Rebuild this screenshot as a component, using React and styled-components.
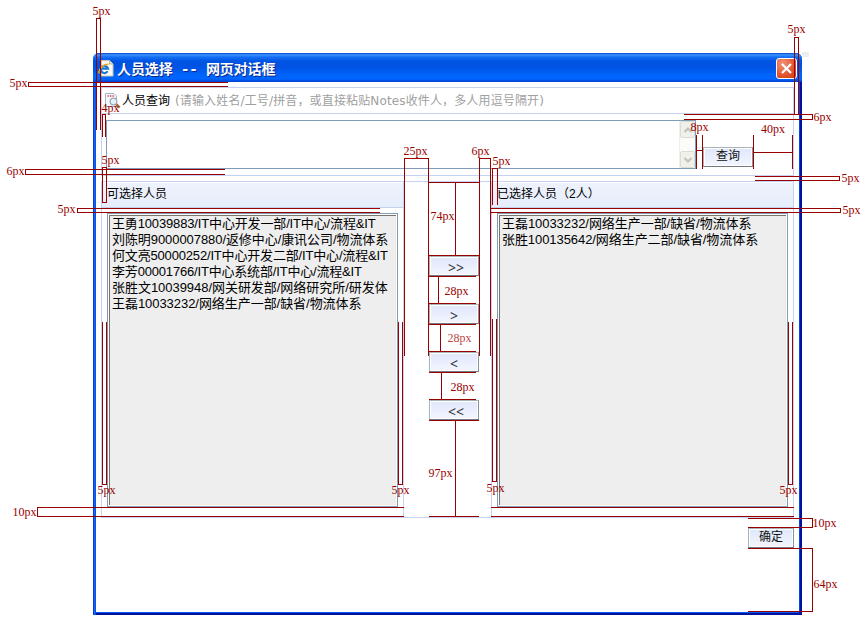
import React from 'react';
import styled, { createGlobalStyle } from 'styled-components';

const cjk = '"Noto Sans CJK SC", sans-serif';

const GlobalStyle = createGlobalStyle`
  *, *::before, *::after { box-sizing: border-box; }
  body { margin: 0; background: #fff; overflow: hidden; }
`;

const Page = styled.main`
  position: relative;
  width: 866px;
  height: 621px;
  padding: 53px 0 0 93px;
  font-family: "Liberation Sans", ${cjk};
  font-size: 12px;
  color: #000;
`;

const Dialog = styled.section`
  width: 709px;
  height: 562px;
  display: flex;
  flex-direction: column;
  border-radius: 6px 6px 0 0;
  background: #0b4ce0;
  overflow: hidden;
`;

const TitleBar = styled.header`
  height: 29px;
  flex: none;
  display: flex;
  align-items: center;
  padding: 1px 5px 0 5px;
  background: linear-gradient(#0a48d0 0, #3c94ff 2px, #1470f4 4px, #0054e3 8px, #0052e2 14px, #0064fc 22px, #0066ff 26px, #003dd0 29px);
`;

const Title = styled.h1`
  margin: 2px auto 0 2px;
  font: bold 14px/20px "DejaVu Sans Mono", ${cjk};
  letter-spacing: -0.1px;
  white-space: pre;
  color: #fff;
  text-shadow: 1px 1px 0 #0a2a8c;
`;

const CloseButton = styled.button`
  width: 21px;
  height: 21px;
  padding: 0;
  display: grid;
  place-items: center;
  border: 1px solid #fff;
  border-radius: 3px;
  background: radial-gradient(circle at 30% 25%, #f0947a, #e2522c 60%, #cf3a12);
`;

const Frame = styled.div`
  flex: 1;
  display: flex;
  padding: 0 3px 3px;
  background: linear-gradient(90deg, #0a3cc8 0, #0a3cc8 1px, #1464ff 1px, #1464ff 2px, #0855e8 2px, #0855e8 3px, #0013a0 3px);
`;

const Body = styled.div`
  flex: 1;
  display: flex;
  flex-direction: column;
  padding: 5px 5px 0;
  background: #fff;
  box-shadow: 1px 0 0 #0046e8, 0 1px 0 #0855f0, 0 3px 0 #00149c;
`;

const SearchPanel = styled.section`
  height: 89px;
  border: 1px solid #c6d3f0;
`;

const SearchHeading = styled.div`
  height: 26px;
  display: flex;
  align-items: center;
  padding-left: 3px;
  border-bottom: 1px solid #c6d3f0;
  white-space: nowrap;
`;

const SearchLabel = styled.span`
  margin: 1px 5px 0 1px;
  font: 12px/18px "Liberation Sans", ${cjk};
`;

const Hint = styled.span`
  margin-top: 1px;
  font: 12px/18px "DejaVu Sans", ${cjk};
  letter-spacing: ${({ $spacing }) => $spacing}px;
  color: #a0a0a0;
`;

const SearchRow = styled.div`
  display: flex;
  align-items: flex-end;
  gap: 7px;
  padding: 6px 0 0 4px;
`;

const TextBox = styled.div`
  width: 590px;
  height: 49px;
  display: flex;
  justify-content: flex-end;
  border: 1px solid #7f9db9;
  background: #fff;
`;

const Scrollbar = styled.div`
  width: 16px;
  display: flex;
  flex-direction: column;
  justify-content: space-between;
  background: #fbfbf9;
  border-left: 1px solid #efefea;
`;

const ScrollButton = styled.div`
  height: 17px;
  display: grid;
  place-items: center;
  border: 1px solid #dddcd2;
  border-radius: 2px;
  background: #f1f0ea;
`;

const Button = styled.button`
  width: ${({ $width }) => $width}px;
  height: 20px;
  flex: none;
  padding: 0 0 2px;
  border: 1px solid;
  border-color: #a9b2b7 #8a9296 #73797c #a9b2b7;
  box-shadow: inset 0 0 0 1px #fff;
  background: linear-gradient(#dfe7fb, #f3f6ff);
  font: 12px/16px "Liberation Sans", ${cjk};
  color: #111;
`;

const QueryButton = styled(Button)`
  margin-bottom: 2px;
`;

const MoveButton = styled(Button)`
  padding: 3px 0 0 ${({ $shift }) => $shift}px;
  font: 14px/15px "Noto Sans", sans-serif;
  color: #333;
`;

const ListsPanel = styled.section`
  height: 337px;
  margin-top: 5px;
  display: grid;
  grid-template-columns: 302px 87px 302px;
  border: 1px solid #c6d3f0;
`;

const ListColumn = styled.div`
  display: flex;
  flex-direction: column;
  border: 0 solid #c6d3f0;
  border-right-width: ${({ $side }) => ($side === 'left' ? 1 : 0)}px;
  border-left-width: ${({ $side }) => ($side === 'right' ? 1 : 0)}px;
`;

const ListHeading = styled.h2`
  height: 26px;
  margin: 0;
  padding: 2px 0 0 5px;
  border-top: 1px solid #fff;
  border-bottom: 1px solid #c6d3f0;
  background: linear-gradient(#eef2fc, #e6edfb);
  font: 12px/18px "Liberation Sans", ${cjk};
`;

const ListBox = styled.ul`
  width: 291px;
  height: 294px;
  margin: 5px 0 0 5px;
  padding: 1px 0 0 2px;
  list-style: none;
  border: 1px solid #7f9db9;
  box-shadow: inset 0 0 0 1px #fff, inset 2px 2px 0 #77756c, inset -2px -2px 0 #f1eadc;
  background: #eee;
  overflow: hidden;
`;

const ListItem = styled.li`
  height: 16px;
  padding-left: 2px;
  font: 13px/17px "Liberation Sans", ${cjk};
  letter-spacing: ${({ $spacing }) => $spacing}px;
  white-space: nowrap;
`;

const MoveColumn = styled.div`
  display: flex;
  flex-direction: column;
  gap: 28px;
  padding: 74px 0 0 25px;
`;

const Footer = styled.footer`
  display: flex;
  justify-content: flex-end;
  padding-top: 10px;
`;

const Annotations = styled.svg`
  position: absolute;
  inset: 0;
  pointer-events: none;
  shape-rendering: crispEdges;
`;

const Measure = styled.text`
  font: 12px "Liberation Serif", serif;
  fill: ${({ $faded }) => ($faded ? '#bc4646' : '#990000')};
`;

const candidates = [
  ['王勇10039883/IT中心开发一部/IT中心/流程&IT', -0.15],
  ['刘陈明9000007880/返修中心/康讯公司/物流体系', -0.07],
  ['何文亮50000252/IT中心开发二部/IT中心/流程&IT', -0.17],
  ['李芳00001766/IT中心系统部/IT中心/流程&IT', -0.18],
  ['张胜文10039948/网关研发部/网络研究所/研发体', -0.04],
  ['王磊10033232/网络生产一部/缺省/物流体系', -0.05],
];

const selected = [
  ['王磊10033232/网络生产一部/缺省/物流体系', -0.05],
  ['张胜100135642/网络生产二部/缺省/物流体系', -0.07],
];

const moves = [['>>', 4], ['>', 0], ['<', 0], ['<<', 4]];

/* Dimension lines: x, y, width, height */
const rules = [
  [96, 18, 5, 1], [96, 18, 1, 112], [100, 18, 1, 112],
  [28, 82, 200, 1], [28, 86, 200, 1], [28, 82, 1, 5],
  [102, 114, 4, 1], [102, 114, 1, 23], [105, 114, 1, 23],
  [102, 167, 5, 1], [102, 202, 5, 1], [102, 167, 1, 36], [106, 167, 1, 36],
  [25, 169, 200, 1], [25, 174, 200, 1], [25, 169, 1, 6],
  [77, 208, 303, 1], [77, 212, 303, 1], [77, 208, 1, 5],
  [404, 158, 25, 1], [404, 158, 1, 198], [428, 158, 1, 198],
  [479, 158, 12, 1], [479, 158, 1, 198], [490, 158, 1, 198],
  [492, 168, 6, 1], [492, 168, 1, 37], [497, 168, 1, 37],
  [491, 208, 350, 1], [491, 212, 350, 1], [840, 208, 1, 5],
  [755, 176, 85, 1], [755, 180, 85, 1], [839, 176, 1, 5],
  [684, 114, 129, 1], [684, 119, 129, 1], [812, 114, 1, 6],
  [794, 37, 5, 1], [794, 37, 1, 77], [798, 37, 1, 77],
  [696, 135, 1, 34], [702, 135, 1, 34], [696, 150, 7, 1],
  [753, 135, 1, 34], [792, 135, 1, 34], [753, 152, 40, 1],
  [429, 182, 50, 1], [455, 182, 1, 74], [429, 255, 50, 1],
  [429, 276, 47, 1], [438, 276, 1, 28], [429, 303, 47, 1],
  [429, 324, 47, 1], [440, 324, 1, 28], [429, 351, 47, 1],
  [429, 372, 47, 1], [441, 372, 1, 28], [429, 399, 47, 1],
  [429, 420, 50, 1], [455, 420, 1, 97], [429, 516, 50, 1],
  [102, 322, 1, 163], [106, 322, 1, 163], [102, 484, 5, 1],
  [398, 322, 1, 163], [402, 322, 1, 163], [398, 484, 5, 1],
  [492, 319, 1, 163], [496, 319, 1, 163], [492, 481, 5, 1],
  [788, 322, 1, 163], [792, 322, 1, 163], [788, 484, 5, 1],
  [37, 507, 367, 1], [37, 516, 367, 1], [37, 507, 1, 10],
  [491, 507, 303, 1], [491, 516, 303, 1],
  [748, 518, 65, 1], [748, 527, 65, 1], [812, 518, 1, 10],
  [748, 548, 65, 1], [748, 611, 65, 1], [812, 548, 1, 64],
];

const measures = [
  ['5px', 92.5, 15], ['5px', 9.5, 87], ['4px', 101.5, 112], ['5px', 101.5, 164],
  ['6px', 6.5, 175], ['5px', 57.5, 213], ['25px', 403.5, 155], ['6px', 471.5, 155],
  ['5px', 492.5, 165], ['5px', 842.5, 214], ['5px', 841.5, 182], ['6px', 813.5, 121],
  ['5px', 787.5, 33], ['8px', 690.5, 131], ['40px', 761, 133], ['74px', 430.5, 220],
  ['28px', 444.5, 295], ['28px', 447.5, 342, true], ['28px', 450.5, 391],
  ['97px', 428.5, 477], ['5px', 97.5, 494], ['5px', 391.5, 494], ['5px', 486.5, 492],
  ['5px', 779.5, 494], ['10px', 12.5, 516], ['10px', 812.5, 527], ['64px', 813.5, 588],
];

const BrowserIcon = () => (
  <svg width="17" height="17" viewBox="0 0 17 17">
    <path d="M3.500 .5h8l3.500 3.500v12H3.500z" fill="#fbfaf3" stroke="#c9c5b4" />
    <path d="M11.500 .5V4h3.500" fill="#e4e0d0" stroke="#b9b5a4" />
    <path d="M9.600 11.300A3.600 3.600 0 1 1 10 8.600H4" fill="none" stroke="#1d78d8" strokeWidth="2.200" />
    <path d="M1.200 13.500C-.5 10 6 3.500 10.500 4.500" fill="none" stroke="#e8aa22" strokeWidth="1.500" />
  </svg>
);

const SearchIcon = () => (
  <svg width="16" height="16" viewBox="0 0 16 16">
    <path d="M.5 .5h8.500l2.500 2.500v10.500H.5z" fill="#f4f8ff" stroke="#a5b3cc" />
    <path d="M2.500 3h1.300M5 3h1.300M7.500 3h1.300" stroke="#d33" strokeWidth="1.500" />
    <circle cx="8.500" cy="8.500" r="3.300" fill="#e5effb" stroke="#a3aab5" strokeWidth="1.300" />
    <path d="M11.300 11.300l3.300 3.300" stroke="#a5703b" strokeWidth="2.600" />
  </svg>
);

const Chevron = ({ up }) => (
  <svg width="10" height="8" viewBox="0 0 10 8">
    <path d={up ? 'M1.500 6L5 2.500 8.500 6' : 'M1.500 2L5 5.500 8.500 2'} fill="none" stroke="#c4c3ba" strokeWidth="2.200" />
  </svg>
);

const PeopleList = ({ people }) => (
  <ListBox>
    {people.map(([text, spacing]) => (
      <ListItem key={text} $spacing={spacing}>{text}</ListItem>
    ))}
  </ListBox>
);

export default function App() {
  return (
    <Page>
      <GlobalStyle />
      <Dialog>
        <TitleBar>
          <BrowserIcon />
          <Title>人员选择 -- 网页对话框</Title>
          <CloseButton aria-label="关闭">
            <svg width="13" height="13" viewBox="0 0 13 13">
              <path d="M2 2l9 9M11 2l-9 9" stroke="#fff" strokeWidth="2.200" />
            </svg>
          </CloseButton>
        </TitleBar>
        <Frame>
          <Body>
            <SearchPanel>
              <SearchHeading>
                <SearchIcon />
                <SearchLabel>人员查询</SearchLabel>
                <Hint $spacing={0.14}>(请输入姓名/工号/拼音，或直接粘贴Notes收件人，多人用逗号隔开)</Hint>
              </SearchHeading>
              <SearchRow>
                <TextBox>
                  <Scrollbar>
                    <ScrollButton><Chevron up /></ScrollButton>
                    <ScrollButton><Chevron /></ScrollButton>
                  </Scrollbar>
                </TextBox>
                <QueryButton $width={50}>查询</QueryButton>
              </SearchRow>
            </SearchPanel>
            <ListsPanel>
              <ListColumn $side="left">
                <ListHeading>可选择人员</ListHeading>
                <PeopleList people={candidates} />
              </ListColumn>
              <MoveColumn>
                {moves.map(([label, shift]) => (
                  <MoveButton key={label} $width={50} $shift={shift}>{label}</MoveButton>
                ))}
              </MoveColumn>
              <ListColumn $side="right">
                <ListHeading>已选择人员（2人）</ListHeading>
                <PeopleList people={selected} />
              </ListColumn>
            </ListsPanel>
            <Footer>
              <Button $width={46}>确定</Button>
            </Footer>
          </Body>
        </Frame>
      </Dialog>
      <Annotations width="866" height="621">
        <rect x="802" y="52" width="7" height="5" fill="#eeeeee" />
        {rules.map(([x, y, width, height]) => (
          <rect key={`${x}-${y}-${width}-${height}`} x={x} y={y} width={width} height={height} fill="#990000" />
        ))}
        {measures.map(([label, x, y, faded]) => (
          <Measure key={`${x}-${y}`} x={x} y={y} $faded={faded}>{label}</Measure>
        ))}
      </Annotations>
    </Page>
  );
}
